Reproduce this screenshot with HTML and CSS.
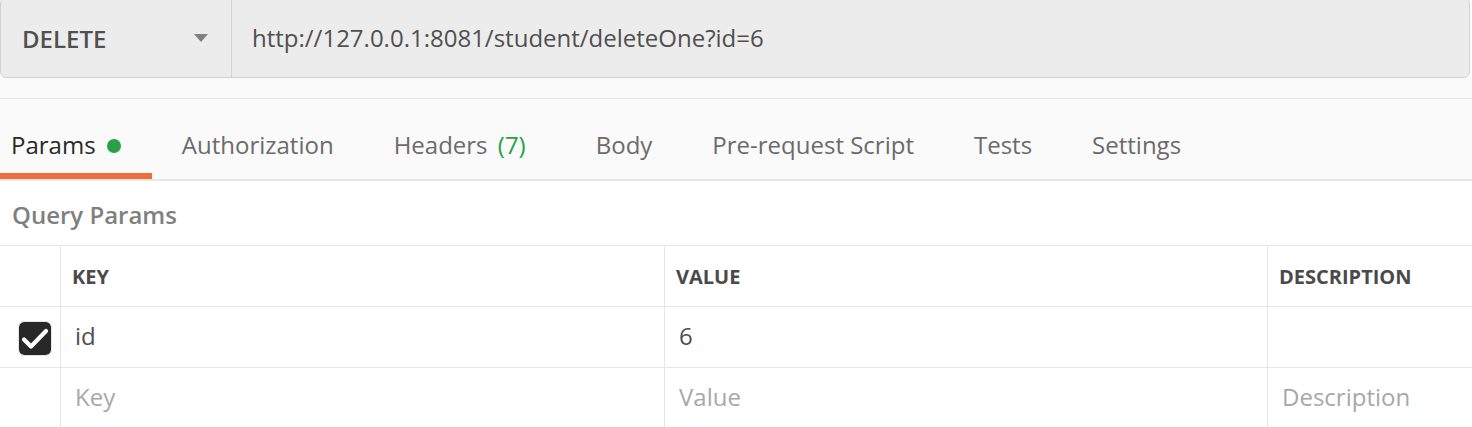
FILE: index.html
```html
<!DOCTYPE html>
<html lang="en">
<head>
<meta charset="utf-8">
<title>Postman request</title>
<link rel="stylesheet" href="styles.css">
</head>
<body>
<div class="request-bar">
  <div class="method">
    <span class="method-name">DELETE</span>
    <svg class="caret" width="14" height="8" viewBox="0 0 14 8"><path d="M0 0 H14 L7 8 Z" fill="#808080"/></svg>
  </div>
  <div class="url">http://127.0.0.1:8081/student/deleteOne?id=6</div>
</div>
<div class="spacer"></div>
<nav class="tabs">
  <div class="tab active">Params <span class="dot"></span></div>
  <div class="tab">Authorization</div>
  <div class="tab">Headers <span class="count">(7)</span></div>
  <div class="tab">Body</div>
  <div class="tab">Pre-request Script</div>
  <div class="tab">Tests</div>
  <div class="tab">Settings</div>
</nav>
<section class="params">
  <div class="section-title">Query Params</div>
  <div class="grid">
    <div class="cell head check-col"></div>
    <div class="cell head">KEY</div>
    <div class="cell head">VALUE</div>
    <div class="cell head">DESCRIPTION</div>

    <div class="cell check-col">
      <span class="checkbox">
        <svg width="32" height="33" viewBox="0 0 32 33"><path d="M5 17.5 L12 24.5 L27 9" fill="none" stroke="#ffffff" stroke-width="4.2" stroke-linecap="round" stroke-linejoin="round"/></svg>
      </span>
    </div>
    <div class="cell val">id</div>
    <div class="cell val">6</div>
    <div class="cell val"></div>

    <div class="cell check-col"></div>
    <div class="cell val placeholder">Key</div>
    <div class="cell val placeholder">Value</div>
    <div class="cell val placeholder">Description</div>
  </div>
</section>
</body>
</html>
```
FILE: styles.css
```css
* { box-sizing: border-box; }
html, body {
  margin: 0;
  padding: 0;
  background: #ffffff;
  font-family: "Open Sans", "Noto Sans", sans-serif;
  overflow: hidden;
}
.request-bar {
  display: flex;
  width: 1470px;
  height: 81px;
  margin-top: -3px;
  background: #ececec;
  border: 1px solid #d2d2d2;
  border-radius: 6px;
}
.method {
  width: 231px;
  flex: none;
  display: flex;
  align-items: center;
  justify-content: space-between;
  padding: 1px 23px 0 21px;
  border-right: 1px solid #d4d4d4;
}
.method-name {
  font-size: 24px;
  font-weight: 600;
  color: #505050;
}
.url {
  display: flex;
  align-items: center;
  padding: 0 0 0 20px;
  font-size: 24px;
  color: #505050;
}
.spacer {
  height: 21px;
  background: #fafafa;
  border-bottom: 1px solid #e6e6e6;
}
.tabs {
  display: flex;
  height: 82px;
  background: #fafafa;
  border-bottom: 2px solid #e8e8e8;
}
.tab {
  height: 80px;
  padding: 18px 30px 0 30px;
  line-height: 56px;
  font-size: 24px;
  color: #6b6b6b;
  border-bottom: 6px solid transparent;
  display: flex;
  align-items: center;
  white-space: pre;
}
.tab.active {
  padding-left: 11px;
  padding-right: 31px;
  color: #282828;
  border-bottom-color: #f26b3a;
}
.dot {
  display: inline-block;
  width: 14px;
  height: 14px;
  border-radius: 50%;
  background: #26a148;
  margin-left: 5px;
  margin-top: 2px;
}
.count {
  color: #26a148;
  margin-left: 4px;
  margin-right: 10px;
}
.section-title {
  height: 64px;
  padding: 2px 0 0 12px;
  display: flex;
  align-items: center;
  font-size: 24px;
  font-weight: 600;
  color: #808080;
}
.grid {
  display: grid;
  grid-template-columns: 60px 604px 603px 1fr;
}
.cell {
  height: 61px;
  border-top: 1px solid #e6e6e6;
  border-left: 1px solid #e6e6e6;
  display: flex;
  align-items: center;
  color: #505050;
}
.cell.check-col {
  border-left: none;
  padding-left: 18px;
}
.cell.head {
  padding: 1px 0 0 11px;
  font-size: 20px;
  font-weight: 700;
  color: #4a4a4a;
}
.cell.head.check-col { padding: 0; }
.cell.val {
  padding: 0 0 3px 14px;
  font-size: 24px;
}
.placeholder { color: #a8a8a8; }
.checkbox {
  display: block;
  width: 34px;
  height: 35px;
  margin-top: 2px;
  border: 1px solid #e4e4e4;
  border-radius: 6px;
  background: #282828;
  background-clip: padding-box;
  overflow: hidden;
}
.checkbox svg { display: block; }
```
